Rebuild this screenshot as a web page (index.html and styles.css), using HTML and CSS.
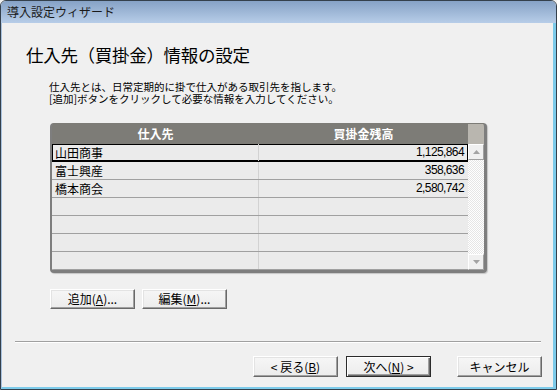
FILE: index.html
```html
<!DOCTYPE html>
<html lang="ja">
<head>
<meta charset="utf-8">
<title>導入設定ウィザード</title>
<link rel="stylesheet" href="styles.css">
</head>
<body>
<div class="window">
  <div class="titlebar">導入設定ウィザード</div>
  <div class="client">
    <h1 class="heading">仕入先（買掛金）情報の設定</h1>
    <p class="desc"><span class="line">仕入先とは、日常定期的に掛で仕入がある取引先を指します。</span><span class="line">[追加]ボタンをクリックして必要な情報を入力してください。</span></p>
    <div class="grid">
      <div class="grid-head">
        <div class="hcell c1">仕入先</div>
        <div class="hcell c2">買掛金残高</div>
        <div class="hcorner"></div>
      </div>
      <div class="grid-body">
        <div class="rows">
          <div class="row selected"><div class="cell c1">山田商事</div><div class="cell c2">1,125,864</div></div>
          <div class="row"><div class="cell c1">富士興産</div><div class="cell c2">358,636</div></div>
          <div class="row"><div class="cell c1">橋本商会</div><div class="cell c2">2,580,742</div></div>
          <div class="row"><div class="cell c1"></div><div class="cell c2"></div></div>
          <div class="row"><div class="cell c1"></div><div class="cell c2"></div></div>
          <div class="row"><div class="cell c1"></div><div class="cell c2"></div></div>
          <div class="row"><div class="cell c1"></div><div class="cell c2"></div></div>
        </div>
        <div class="scrollbar">
          <div class="sbtn"><svg width="7" height="4" viewBox="0 0 7 4"><polygon points="3.5,0 7,4 0,4" fill="#a3a3a3"/></svg></div>
          <div class="track"></div>
          <div class="sbtn"><svg width="7" height="4" viewBox="0 0 7 4"><polygon points="0,0 7,0 3.5,4" fill="#a3a3a3"/></svg></div>
        </div>
      </div>
    </div>
    <div class="actions">
      <button class="btn">追加(<u>A</u>)...</button>
      <button class="btn">編集(<u>M</u>)...</button>
    </div>
    <hr class="sep">
    <div class="footer">
      <button class="btn wide">&lt; 戻る(<u>B</u>)</button>
      <button class="btn wide default">次へ(<u>N</u>) &gt;</button>
      <button class="btn wide cancel">キャンセル</button>
    </div>
  </div>
</div>
</body>
</html>
```
FILE: styles.css
```css
* { box-sizing: border-box; }
html, body { margin: 0; padding: 0; }
body {
  width: 557px;
  height: 390px;
  overflow: hidden;
  background: #f0f0f0;
  font-family: "Noto Sans CJK JP", "Noto Sans", sans-serif;
  color: #000;
}
.window {
  width: 557px;
  height: 390px;
  display: flex;
  flex-direction: column;
  border: 1px solid #34404c;
  border-radius: 6px 6px 0 0;
  overflow: hidden;
  background: #f0f0f0;
}
.titlebar {
  height: 22px;
  flex: none;
  background: linear-gradient(#86a2c6, #b7cde8);
  padding-left: 6px;
  font-size: 12px;
  line-height: 22px;
  color: #1a1a1a;
}
.client {
  flex: 1;
  display: flex;
  flex-direction: column;
  border-left: 1px solid #a9c2de;
  border-right: 3px solid #7dcbea;
  border-bottom: 2px solid #7dcbea;
  background: #f0f0f0;
}
.heading {
  margin: 20px 0 0 24px;
  font-size: 17.5px;
  line-height: 24px;
  font-weight: normal;
  letter-spacing: -0.3px;
}
.desc {
  margin: 14px 0 0 47px;
  font-size: 10.5px;
  display: flex;
  flex-direction: column;
}
.desc .line {
  display: block;
  height: 12px;
  line-height: 12px;
  white-space: nowrap;
}
.grid {
  margin: 18px 0 0 48px;
  width: 437px;
  height: 150px;
  flex: none;
  border-style: solid;
  border-color: #7d7c77 #7e7e7e #7e7e7e #7e7e7e;
  border-width: 1px 3px 3px 2px;
  border-radius: 4px;
  background: #7d7c77;
  display: flex;
  flex-direction: column;
  overflow: hidden;
  box-shadow: 1px 1px 1px rgba(0, 0, 0, 0.18);
}
.grid-head {
  height: 20px;
  flex: none;
  display: flex;
}
.hcell {
  color: #fff;
  font-weight: bold;
  font-size: 12px;
  line-height: 20px;
  text-align: center;
}
.hcell.c1 { width: 207px; }
.hcell.c2 { width: 209px; }
.hcorner { width: 16px; background: #b9b6af; }
.grid-body {
  flex: 1;
  display: flex;
}
.rows {
  width: 416px;
  background: #ebebeb;
}
.row {
  display: flex;
  height: 18px;
  border-bottom: 1px solid #a0a0a0;
}
.row.selected {
  border-bottom-color: #000;
  box-shadow: inset 0 0 0 1px #000;
}
.cell {
  font-size: 12px;
  line-height: 17px;
  white-space: nowrap;
}
.cell.c1 {
  width: 207px;
  border-right: 1px solid #d2d2d2;
  padding-left: 3px;
}
.cell.c2 {
  flex: 1;
  text-align: right;
  padding-right: 4px;
  font-family: "Liberation Sans", sans-serif;
  letter-spacing: -0.6px;
}
.scrollbar {
  width: 16px;
  display: flex;
  flex-direction: column;
}
.sbtn {
  height: 16px;
  flex: none;
  background: #f0f0f0;
  border: 1px solid;
  border-color: #fff #a0a0a0 #a0a0a0 #fff;
  display: flex;
  align-items: center;
  justify-content: center;
}
.sbtn svg { display: block; }
.track {
  flex: 1;
  background: repeating-conic-gradient(#ffffff 0 25%, #e6e6e6 0 50%) 0 0 / 2px 2px;
}
.actions {
  margin: 16px 0 0 48px;
  display: flex;
  gap: 7px;
}
.btn {
  width: 85px;
  height: 20px;
  padding: 0;
  font-family: "Noto Sans CJK JP", sans-serif;
  font-size: 12px;
  line-height: 16px;
  color: #000;
  background: linear-gradient(#f6f6f6, #ececec);
  border: 1px solid;
  border-color: #fff #696969 #696969 #fff;
  box-shadow: inset -1px -1px #a0a0a0, inset 1px 1px #e3e3e3;
  text-align: center;
}
.btn u { text-underline-offset: 1px; }
.btn.wide { height: 21px; }
.btn.default {
  border-color: #2b2b2b;
  box-shadow: inset 1px 1px #fff, inset -1px -1px #696969, inset -2px -2px #a0a0a0;
}
.sep {
  margin: 32px 0 0 13px;
  width: 526px;
  height: 0;
  border: 0;
  border-top: 1px solid #a0a0a0;
  border-bottom: 1px solid #fff;
}
.footer {
  margin-top: 13px;
  display: flex;
  justify-content: flex-end;
  gap: 8px;
  padding-right: 11px;
}
.btn.cancel { margin-left: 18px; }
```
